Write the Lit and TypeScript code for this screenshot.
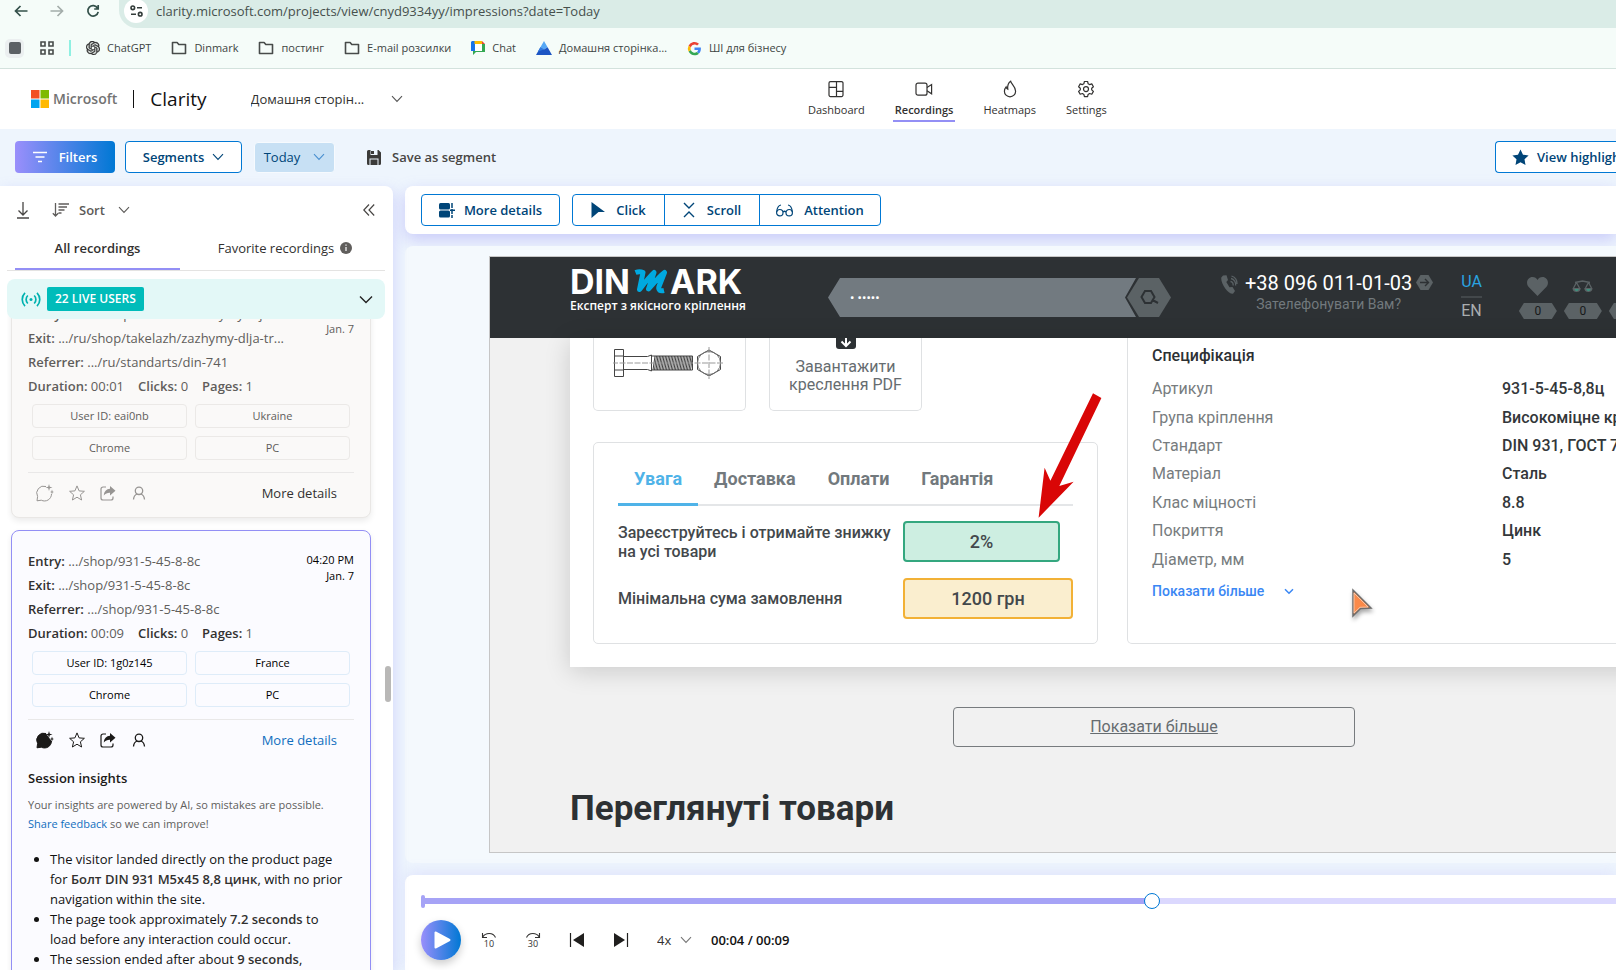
import { LitElement, html, css, svg, nothing } from "lit";
import { customElement } from "lit/decorators.js";
import { classMap } from "lit/directives/class-map.js";

const icon = (w: number, h: number, body: unknown, box = `0 0 ${w} ${h}`) => html`
  <svg width=${w} height=${h} viewBox=${box} fill="none" aria-hidden="true">${body}</svg>
`;

const chevron = (w = 12, color = "currentColor") =>
  icon(w, 8, svg`<path d="M1 1.2 6 6.4l5-5.2" stroke=${color} stroke-width="1.1"/>`, "0 0 12 8");

const folder = () =>
  icon(16, 14, svg`<path d="M1.5 1.5h4.6l1.7 2h6.7v9h-13z" stroke="#474b4a" stroke-width="1.6" stroke-linejoin="round"/>`);

const chatGpt = () =>
  icon(14, 14, svg`<path fill="#333" stroke="#333" stroke-width=".7" d="M22.2819 9.8211a5.9847 5.9847 0 0 0-.5157-4.9108 6.0462 6.0462 0 0 0-6.5098-2.9A6.0651 6.0651 0 0 0 4.9807 4.1818a5.9847 5.9847 0 0 0-3.9977 2.9 6.0462 6.0462 0 0 0 .7427 7.0966 5.98 5.98 0 0 0 .511 4.9107 6.051 6.051 0 0 0 6.5146 2.9001A5.9847 5.9847 0 0 0 13.2599 24a6.0557 6.0557 0 0 0 5.7718-4.2058 5.9894 5.9894 0 0 0 3.9977-2.9001 6.0557 6.0557 0 0 0-.7475-7.0729zm-9.022 12.6081a4.4755 4.4755 0 0 1-2.8764-1.0408l.1419-.0804 4.7783-2.7582a.7948.7948 0 0 0 .3927-.6813v-6.7369l2.02 1.1686a.071.071 0 0 1 .038.052v5.5826a4.504 4.504 0 0 1-4.4945 4.4944zm-9.6607-4.1254a4.4708 4.4708 0 0 1-.5346-3.0137l.142.0852 4.783 2.7582a.7712.7712 0 0 0 .7806 0l5.8428-3.3685v2.3324a.0804.0804 0 0 1-.0332.0615L9.74 19.9502a4.4992 4.4992 0 0 1-6.1408-1.6464zM2.3408 7.8956a4.485 4.485 0 0 1 2.3655-1.9728V11.6a.7664.7664 0 0 0 .3879.6765l5.8144 3.3543-2.0201 1.1685a.0757.0757 0 0 1-.071 0l-4.8303-2.7865A4.504 4.504 0 0 1 2.3408 7.872zm16.5963 3.8558L13.1038 8.364 15.1192 7.2a.0757.0757 0 0 1 .071 0l4.8303 2.7913a4.4944 4.4944 0 0 1-.6765 8.1042v-5.6772a.79.79 0 0 0-.407-.667zm2.0107-3.0231l-.142-.0852-4.7735-2.7818a.7759.7759 0 0 0-.7854 0L9.409 9.2297V6.8974a.0662.0662 0 0 1 .0284-.0615l4.8303-2.7866a4.4992 4.4992 0 0 1 6.6802 4.66zM8.3065 12.863l-2.02-1.1638a.0804.0804 0 0 1-.038-.0567V6.0742a4.4992 4.4992 0 0 1 7.3757-3.4537l-.142.0805L8.704 5.459a.7948.7948 0 0 0-.3927.6813zm1.0976-2.3654l2.602-1.4998 2.6069 1.4998v2.9994l-2.5974 1.4997-2.6067-1.4997Z"/>`, "0 0 24 24");

const googleChat = () =>
  icon(14, 14, svg`
    <path d="M1 0h10v3H4v7H0V1z" fill="#1a73e8"/>
    <path d="M3.5 0H11v3H3.5z" fill="#fbbc04"/>
    <path d="M11 0l3 3h-3z" fill="#ea4335"/>
    <path d="M11 3h3v8H5l-3 3V10h9z" fill="#34a853"/>
    <path d="M4 3h7v7H4z" fill="#fff"/>`);

const peak = () =>
  icon(16, 14, svg`
    <path d="M8 0l3.6 6.3L8 8.6 4.4 6.3z" fill="#56a8f5"/>
    <path d="M4.4 6.3 8 8.6l3.6-2.3L16 14H0z" fill="#1c55c4"/>
    <path d="M8 8.6 4.4 6.3 2 10.5z" fill="#2f7be0"/>`);

const google = () =>
  icon(15, 15, svg`
    <path d="M13.900 7.700c0-.5 0-.9-.1-1.300H7.500v2.500h3.600a3.100 3.100 0 0 1-1.300 2l2.100 1.700c1.300-1.200 2-2.900 2-4.900z" fill="#4285f4"/>
    <path d="M7.500 14.300c1.800 0 3.300-.6 4.400-1.600l-2.100-1.700a4 4 0 0 1-6-2.100L1.600 10.600a6.700 6.700 0 0 0 5.900 3.700z" fill="#34a853"/>
    <path d="M3.800 8.900a4 4 0 0 1 0-2.600L1.600 4.600a6.700 6.700 0 0 0 0 6z" fill="#fbbc05"/>
    <path d="M7.500 3.600c1 0 1.900.3 2.600 1l1.900-1.900A6.700 6.700 0 0 0 1.600 4.600l2.200 1.700a4 4 0 0 1 3.700-2.700z" fill="#ea4335"/>`);

interface Bookmark { label: string; glyph: () => unknown }
const bookmarks: Bookmark[] = [
  { label: "ChatGPT", glyph: chatGpt },
  { label: "Dinmark", glyph: folder },
  { label: "постинг", glyph: folder },
  { label: "E-mail розсилки", glyph: folder },
  { label: "Chat", glyph: googleChat },
  { label: "Домашня сторінка…", glyph: peak },
  { label: "ШІ для бізнесу", glyph: google },
];

const navItems = [
  { label: "Dashboard", glyph: svg`<path d="M3.500 1.600h11a1.500 1.500 0 0 1 1.500 1.500v12a1.500 1.500 0 0 1-1.500 1.500h-11A1.500 1.500 0 0 1 2 15.100v-12a1.500 1.500 0 0 1 1.500-1.500zM9.500 1.600v15M2 7.400h7.500M9.500 11.400H16"/>` },
  { label: "Recordings", active: true, glyph: svg`<rect x="1" y="3.200" width="11" height="12" rx="2"/><path d="m12 7.600 4.600-3v9.200l-4.600-3"/>` },
  { label: "Heatmaps", glyph: svg`<path d="M9.600 1.200c.4 2.800 5 5.400 5 10a5.600 5.600 0 0 1-11.200 0c0-1.800.7-3.200 1.700-4.400.3 1.300.8 2 1.700 2.400C6.400 6 7 3 9.600 1.200z"/>` },
  { label: "Settings", glyph: svg`<path d="M7.400 1.500h3.200l.5 2.200 1.500.9 2.200-.7 1.600 2.800-1.700 1.500v1.700l1.700 1.500-1.600 2.800-2.200-.7-1.500.9-.5 2.200H7.400l-.5-2.200-1.500-.9-2.200.7-1.600-2.800 1.700-1.500V8.200L1.600 6.700l1.600-2.800 2.200.7 1.500-.9z" stroke-linejoin="round"/><circle cx="9" cy="9.050" r="2.500"/>` },
];

interface Recording {
  entry: string; exit: string; referrer: string;
  time: string; duration: string; user: string; country: string;
  selected?: boolean;
}
const recordings: Recording[] = [
  { entry: ".../ru/shop/takelazh/zazhymy-dlja-tr...", exit: ".../ru/shop/takelazh/zazhymy-dlja-tr...", referrer: ".../ru/standarts/din-741", time: "04:21 PM", duration: "00:01", user: "eai0nb", country: "Ukraine" },
  { entry: ".../shop/931-5-45-8-8c", exit: ".../shop/931-5-45-8-8c", referrer: ".../shop/931-5-45-8-8c", time: "04:20 PM", duration: "00:09", user: "1g0z145", country: "France", selected: true },
];

const specs = [
  ["Артикул", "931-5-45-8,8ц"],
  ["Група кріплення", "Високоміцне кріплення"],
  ["Стандарт", "DIN 931, ГОСТ 7798-70"],
  ["Матеріал", "Сталь"],
  ["Клас міцності", "8.8"],
  ["Покриття", "Цинк"],
  ["Діаметр, мм", "5"],
];

const reset = css`
  *, *::before, *::after { box-sizing: border-box; }
  h2, h3, p, ul, dl, dd { margin: 0; padding: 0; }
  button, input, select { font: inherit; color: inherit; margin: 0; }
  button { border: 0; background: none; padding: 0; white-space: nowrap; cursor: pointer; }
  a { color: inherit; text-decoration: none; }
  svg { display: block; flex: none; }
`;

@customElement("browser-bar")
class BrowserBar extends LitElement {
  static styles = [reset, css`
    :host { display: block; flex: none; background: #f5fcf9; border-bottom: 1px solid #d3e2dd; font-size: 11px; color: #3d4543; }
    .address { display: flex; height: 28px; align-items: center; }
    .tools { display: flex; align-items: center; height: 22px; gap: 22px; padding-left: 14px; margin-bottom: 6px; width: 119px; flex: none; }
    .pill { flex: 1; height: 28px; display: flex; align-items: center; gap: 8px; padding: 0 0 6px 5px; background: #daece7; border-radius: 0 0 0 18px; }
    .info { width: 24px; height: 24px; border-radius: 50%; background: #fff; display: grid; place-items: center; flex: none; }
    .url { flex: 1; border: 0; padding: 0; outline: 0; background: none; font-size: 13px; color: #46504d; }
    .marks { display: flex; align-items: center; height: 40px; padding-left: 5px; }
    .tab { width: 19px; height: 19px; border-radius: 5px; background: #ebeff0; display: grid; place-items: center; margin-right: 16px; }
    .rule { width: 2px; height: 16px; background: #8ff0e2; margin: 0 15px; }
    .mark { display: flex; align-items: center; gap: 7px; margin-right: 20px; white-space: nowrap; }
  `];
  render() {
    return html`
      <div class="address">
        <div class="tools">
          ${icon(14, 12, svg`<path d="M13.500 6H1.500M6.500 1 1.500 6l5 5" stroke="#33504a" stroke-width="1.700"/>`)}
          ${icon(14, 12, svg`<path d="M.5 6h12M7.500 1l5 5-5 5" stroke="#a3adaa" stroke-width="1.700"/>`)}
          ${icon(14, 14, svg`<path d="M11.600 4.200A5.200 5.200 0 1 0 12.200 7.800M12.200 1v4H8.200" stroke="#33504a" stroke-width="1.700"/>`)}
        </div>
        <div class="pill">
          <span class="info">${icon(13, 12, svg`<g stroke="#333c3a" stroke-width="1.600"><circle cx="2.800" cy="2.800" r="1.800"/><path d="M7 2.800h5M1 9.200h5"/><circle cx="10.200" cy="9.200" r="1.800"/></g>`)}</span>
          <input class="url" aria-label="Address" value="clarity.microsoft.com/projects/view/cnyd9334yy/impressions?date=Today" />
        </div>
      </div>
      <div class="marks">
        <span class="tab">${icon(12, 12, svg`<rect width="12" height="12" rx="2" fill="#5c6165"/>`)}</span>
        ${icon(14, 14, svg`<g stroke="#474b4a" stroke-width="1.600"><path d="M1 1h4v4H1zM9 1h4v4H9zM1 9h4v4H1zM9 9h4v4H9z"/></g>`)}
        <span class="rule"></span>
        ${bookmarks.map((b) => html`<a class="mark" href="#">${b.glyph()}${b.label}</a>`)}
      </div>`;
  }
}

@customElement("recording-card")
class RecordingCard extends LitElement {
  static properties = { data: { attribute: false } };
  declare data: Recording;
  static styles = [reset, css`
    :host { display: block; }
    .card { padding: 18px 16px 4px; border: 1px solid #e9e7e5; border-radius: 8px; background: #faf9f8; color: #5f5d5b; box-shadow: 0 3px 6px rgba(0, 0, 0, .08); }
    .card.on { background: #fbfbff; border-color: #938ff5; color: #605e5c; }
    .top { display: flex; justify-content: space-between; }
    .line { line-height: 24px; white-space: nowrap; }
    .line b { font-weight: 600; }
    .on b { color: #323130; }
    .stats { display: flex; gap: 14px; }
    .when { font-size: 11px; line-height: 16px; text-align: right; padding-top: 3px; white-space: nowrap; flex: none; }
    .chips { display: grid; grid-template-columns: 1fr 1fr; gap: 8px; margin: 6px 4px 12px; }
    .chip { height: 24px; border: 1px solid #ebe9e7; border-radius: 4px; font-size: 11px; line-height: 22px; text-align: center; }
    .on .chip { border-color: #deecf9; }
    .on .chip, .on .when { color: #000; }
    .actions { display: flex; align-items: center; height: 41px; border-top: 1px solid #e9e8e8; padding: 0 17px 0 8px; gap: 15px; color: #979593; }
    .actions.on { color: #1b1a19; }
    .more { margin-left: auto; color: #323130; }
    .on .more, .link { color: #106ebe; }
    h3 { font-size: 13px; line-height: 24px; margin-top: 6px; font-weight: 600; color: #1b1a19; }
    .note { font-size: 11px; line-height: 19px; margin-top: 5px; }
    ul { margin-top: 16px; padding: 0 8px 0 22px; line-height: 20px; color: #111; }
    ul b { font-weight: 600; }
  `];
  render() {
    const r = this.data;
    const on = !!r.selected;
    return html`
      <article class=${classMap({ card: true, on })}>
        <div class="top">
          <div>
            <div class="line"><b>Entry:</b> ${r.entry}</div>
            <div class="line"><b>Exit:</b> ${r.exit}</div>
          </div>
          <div class="when">${r.time}<br />Jan. 7</div>
        </div>
        <div class="line"><b>Referrer:</b> ${r.referrer}</div>
        <div class="line stats"><span><b>Duration:</b> ${r.duration}</span><span><b>Clicks:</b> 0</span><span><b>Pages:</b> 1</span></div>
        <div class="chips">
          <span class="chip">User ID: ${r.user}</span><span class="chip">${r.country}</span>
          <span class="chip">Chrome</span><span class="chip">PC</span>
        </div>
        <div class=${classMap({ actions: true, on })}>
          <button aria-label="Insights">${icon(18, 18, svg`
            <path d="M10 2.500A7 7 0 0 0 1.600 12.500L1 16.800l4.300-.6A7 7 0 0 0 15.500 10" stroke="currentColor" fill=${on ? "currentColor" : "none"}/>
            <path d="M13 0l.8 2.700 2.700.8-2.700.8L13 7l-.8-2.700-2.700-.8 2.700-.8zM16 5.500l.6 1.900 1.400.6-1.400.6-.6 1.900-.6-1.900L14 8l1.400-.6z" fill="currentColor"/>
            ${on ? svg`<path d="M9 4.500 11 5.500l1.500 3.500 2.500 2-5 3-3-5z" fill="currentColor"/>` : nothing}`)}</button>
          <button aria-label="Favorite">${icon(16, 16, svg`<path d="m8 .9 2.100 5 5.300.4-4 3.500 1.200 5.200L8 12.200 3.400 15l1.200-5.200-4-3.500 5.300-.4z" stroke="currentColor"/>`)}</button>
          <button aria-label="Share">${icon(16, 16, svg`
            <path d="M6 2H3a2 2 0 0 0-2 2v9a2 2 0 0 0 2 2h8a2 2 0 0 0 2-2v-1.500" stroke="currentColor" stroke-width="1.200"/>
            <path d="M10 1l5.500 4.700L10 10.400V7.700C7.500 7.600 5.500 8.400 3.800 10.600 4 6.500 6.400 3.900 10 3.700z" fill="currentColor"/>`)}</button>
          <button aria-label="Visitor">${icon(16, 14, svg`<circle cx="8" cy="4.800" r="3.700" stroke="currentColor" stroke-width="1.300"/><path d="M2.500 13.500c.2-2.700 1.500-4.700 3.500-5.500M13.500 13.500c-.2-2.700-1.500-4.700-3.500-5.500" stroke="currentColor" stroke-width="1.300"/>`)}</button>
          <button class="more">More details</button>
        </div>
        ${on ? html`
          <h3>Session insights</h3>
          <p class="note">Your insights are powered by AI, so mistakes are possible.<br /><a class="link" href="#">Share feedback</a> so we can improve!</p>
          <ul>
            <li>The visitor landed directly on the product page for <b>Болт DIN 931 М5х45 8,8 цинк</b>, with no prior navigation within the site.</li>
            <li>The page took approximately <b>7.2 seconds</b> to load before any interaction could occur.</li>
            <li>The session ended after about <b>9 seconds</b>, without any clicks.</li>
          </ul>` : nothing}
      </article>`;
  }
}

@customElement("replayed-page")
class ReplayedPage extends LitElement {
  static styles = [reset, css`
    :host { display: block; width: 1328px; position: relative; font-family: Roboto, sans-serif; font-size: 16px; color: #43484b; }
    .head { display: flex; height: 81px; background: #2d3134; padding: 0 0 0 80px; color: #fff; }
    .logo { width: 176px; padding-top: 9px; }
    .word { display: flex; align-items: center; gap: 3px; font: 700 34px/32px Inter, sans-serif; height: 32px; }
    .tag { font: 600 12px/16px "Open Sans", sans-serif; white-space: nowrap; }
    .search { display: flex; margin: 21px 0 0 82px; height: 39px; width: 343px; }
    .field { width: 308px; height: 39px; border: 0; outline: 0; padding: 0 0 0 22px; background: #727a80; color: #fff; font-size: 13px; clip-path: polygon(12px 0, 100% 0, 297px 50%, 100% 100%, 12px 100%, 0 50%); }
    .go { width: 44px; height: 39px; margin-left: -9px; background: #5b6265; clip-path: polygon(12px 0, 32px 0, 100% 50%, 32px 100%, 12px 100%, 0 50%); display: grid; place-items: center; }
    .call { display: flex; margin: 16px 0 0 50px; gap: 7px; }
    .call .glyph { padding-top: 2px; }
    .num { display: block; font-size: 20px; line-height: 20px; white-space: nowrap; }
    .ask { display: block; font-size: 14px; line-height: 22px; color: #72797d; text-align: center; }
    .call .next { margin-left: -3px; }
    .lang { margin: 15px 0 0 28px; line-height: 20px; color: #a9adaf; }
    .lang a { display: block; }
    .lang .cur { color: #2aa3e0; border-bottom: 2px solid #43484b; padding-bottom: 4px; margin-bottom: 3px; }
    .counters { display: flex; margin: 20px 0 0 37px; gap: 7px; }
    .counter { display: grid; justify-items: center; grid-template-rows: 26px 16px; }
    .count { width: 38px; height: 16px; font-size: 12px; line-height: 16px; text-align: center; color: #17191a; background: #5b6265; clip-path: polygon(5px 0, 33px 0, 100% 50%, 33px 100%, 5px 100%, 0 50%); }
    .panel { margin: 0 80px; padding: 0 23px 23px; background: #fff; box-shadow: 0 4px 24px rgba(0, 0, 0, .16); display: grid; grid-template-columns: 505px 1fr; column-gap: 29px; }
    .body { background: #f1f1f1; }
    .files { display: flex; gap: 23px; margin-bottom: 31px; }
    .file { width: 153px; height: 73px; border: 1px solid #dfe1e3; border-top: 0; border-radius: 0 0 5px 5px; display: flex; flex-direction: column; align-items: center; justify-content: flex-start; font-size: 16px; line-height: 18px; text-align: center; color: #666c70; }
    .file .pic { margin-top: 9px; }
    .file .get { margin-bottom: 9px; }
    .info { height: 202px; border: 1px solid #dfe1e3; border-radius: 5px; padding: 14px 24px 0; }
    .tabs { display: flex; border-bottom: 2px solid #e4e6e8; margin-bottom: 15px; }
    .tab { font-size: 18px; font-weight: 700; line-height: 44px; padding: 0 16px 2px; color: #72797d; border-bottom: 3px solid transparent; margin-bottom: -2px; }
    .tab.on { color: #4fb3e8; border-color: #4fb3e8; }
    .row { display: grid; grid-template-columns: 285px 1fr; align-items: center; font-weight: 500; line-height: 19px; margin-bottom: 16px; }
    .pill { height: 41px; border: 2px solid #34a77f; border-radius: 4px; background: #cdeee1; font-size: 18px; line-height: 37px; text-align: center; margin-right: 13px; }
    .pill.sum { background: #faeecf; border-color: #f2b136; margin-right: 0; }
    .spec { border: 1px solid #dfe1e3; border-top: 0; border-radius: 0 0 5px 5px; padding: 8px 24px 0; }
    h3 { font-size: 16px; line-height: 20px; font-weight: 500; color: #2d3134; margin-bottom: 9px; }
    table { height: 199px; width: 100%; border-collapse: collapse; }
    th { width: 350px; padding: 0; font-weight: 400; text-align: left; color: #777c7e; }
    td { padding: 0; font-weight: 500; color: #33373a; }
    .show { display: flex; align-items: center; gap: 20px; margin-top: 7px; font-size: 14px; font-weight: 500; line-height: 20px; color: #3a87f4; }
    .all { display: block; width: 402px; height: 40px; margin: 40px auto 0; border: 1px solid #777b7e; border-radius: 4px; color: #666c70; text-decoration: underline; }
    h2 { padding: 40px 80px 0; font-size: 35px; line-height: 44px; font-weight: 700; color: #2d3134; height: 110px; }
    .arrow { position: absolute; left: 546px; top: 134px; }
    .pointer { position: absolute; left: 861px; top: 331px; filter: drop-shadow(1px 3px 2px rgba(0, 0, 0, .35)); }
  `];
  render() {
    return html`
      <header class="head">
        <div class="logo">
          <div class="word" aria-label="DINMARK"><span>DIN</span>
            ${icon(34, 26, svg`<path d="M2.500 3.500C5 2.500 8 2.500 10 3.500L6.500 20.500C10 16 16 8 21 3.500L15.500 20C20 15.500 25 8.500 31.500 3.500L26 17.500C25 21 27 22.500 31 21.500" stroke="#00a9e0" stroke-width="5" stroke-linejoin="round"/>`)}
            <span>ARK</span></div>
          <div class="tag">Експерт з якісного кріплення</div>
        </div>
        <div class="search">
          <input class="field" aria-label="Пошук" value="• •••••" />
          <button class="go" aria-label="Шукати">${icon(19, 15, svg`<path d="M5 1h6l3.500 6L11 13H5L1.500 7zM12.500 10l5.500 3" stroke="#2d3134" stroke-width="2"/>`)}</button>
        </div>
        <div class="call">
          <span class="glyph">${icon(17, 19, svg`
            <path d="M2 .5 5.500.300 7 5 5.300 7l3.200 5.300L11.500 12l2.500 4-2 2.800C6.500 19-.5 8 .3 2.500z" fill="#5b6265"/>
            <path d="M9.500 6.500a3 3 0 0 1 2.500 4M10 3.500a6 6 0 0 1 4.600 7M10.500 1a8 8 0 0 1 5.500 8" stroke="#5b6265" stroke-width="1.300"/>`)}</span>
          <div><a class="num" href="#">+38 096 011-01-03</a><a class="ask" href="#">Зателефонувати Вам?</a></div>
          <span class="glyph next">${icon(17, 15, svg`<path d="M4.500 0h8L17 7.500 12.500 15h-8L0 7.500z" fill="#5b6265"/><path d="M4 7.500h8.500M9 4l3.500 3.500L9 11" stroke="#2d3134" stroke-width="1.400"/>`)}</span>
        </div>
        <div class="lang"><a class="cur" href="#">UA</a><a href="#">EN</a></div>
        <div class="counters">
          <div class="counter">${icon(21, 19, svg`<path d="M10.500 19 1.700 10C-2 5.500 1 0 5.500 0c2.300 0 4 1.200 5 3 1-1.800 2.700-3 5-3C20 0 23 5.500 19.300 10z" fill="#5b6265"/>`)}<span class="count">0</span></div>
          <div class="counter">${icon(21, 19, svg`
            <path d="M3 5.500 10.500 4 18 5.500M4.500 5.500 1.500 11M4.500 5.500l3 5.500M16.500 5.500l-3 5.500M16.500 5.500l3 5.500" stroke="#5b6265" stroke-width="1.300"/>
            <path d="M.5 11h8.200a4.100 4.100 0 0 1-8.200 0zM12.300 11h8.200a4.100 4.100 0 0 1-8.200 0z" fill="#5b6265"/><path d="M2.500 12h4.300a2 2 0 0 1-4.300 0zM14.300 12h4.300a2 2 0 0 1-4.300 0z" fill="#3f8f7c"/>`)}<span class="count">0</span></div>
          <div class="counter"><span></span><span class="count">0</span></div>
        </div>
      </header>
      <div class="body">
        <section class="panel">
          <div>
            <div class="files">
              <div class="file"><span class="pic">${icon(114, 32, svg`
                <g stroke="#444" stroke-width="1">
                  <path d="M3.500 2.500h9v27h-9zM3.500 9h9M3.500 23h9M12.500 9.500h24l4-1.500v16l-4-1.500h-24M40.500 9h41v14h-41M40.500 9v14"/>
                  ${[42, 45, 48, 51, 54, 57, 60, 63, 66, 69, 72, 75, 78].map((x) => svg`<path d=${`M${x} 23l2-14M${x + 1.5} 23l2-14`}/>`)}
                  <path d="M98 3l11.500 6.500v13L98 29l-11.500-6.500v-13z"/><circle cx="98" cy="16" r="11.500" stroke="#777"/>
                </g>
                <path d="M1 16h112M98 0v32" stroke="#999" stroke-dasharray="6 1.500"/>`, "2 0 114 32")}</span></div>
              <button class="file"><span class="get">${icon(20, 11, svg`<path d="M0 0h20v8a3 3 0 0 1-3 3H3a3 3 0 0 1-3-3z" fill="#2d3134"/><path d="M10 0v7M5.500 3.500 10 8l4.500-4.500" stroke="#fff" stroke-width="2"/>`)}</span>Завантажити<br />креслення PDF</button>
            </div>
            <div class="info">
              <div class="tabs">
                <button class="tab on">Увага</button><button class="tab">Доставка</button><button class="tab">Оплати</button><button class="tab">Гарантія</button>
              </div>
              <div class="row"><span>Зареєструйтесь і отримайте знижку<br />на усі товари</span><span class="pill">2%</span></div>
              <div class="row"><span>Мінімальна сума замовлення</span><span class="pill sum">1200 грн</span></div>
            </div>
          </div>
          <div class="spec">
            <h3>Специфікація</h3>
            <table><tbody>${specs.map(([k, v]) => html`<tr><th scope="row">${k}</th><td>${v}</td></tr>`)}</tbody></table>
            <button class="show">Показати більше ${icon(10, 7, svg`<path d="m1 1.200 4 4 4-4" stroke="#3a87f4" stroke-width="1.500"/>`)}</button>
          </div>
        </section>
        <button class="all">Показати більше</button>
        <h2>Переглянуті товари</h2>
      </div>
      <span class="arrow">${icon(68, 130, svg`<path d="M57 2.300 65.400 7 23.300 95l14.300-4.300L2.600 126.700l6-50 5.800 13z" fill="#d90606"/>`)}</span>
      <span class="pointer">${icon(22, 30, svg`<path d="M2 2v26l7.500-7.500L20 20z" fill="#fb8a4a" stroke="#6d6d6d" stroke-width="1.500"/><path d="M3 5v20l6-5.700 8-.3z" stroke="#f6d3bd" stroke-width=".8"/>`)}</span>`;
  }
}

@customElement("app-root")
class AppRoot extends LitElement {
  static styles = [reset, css`
    :host { display: flex; flex-direction: column; height: 100vh; overflow: hidden; background: #eef5fd; font: 13px/20px "Open Sans", "Noto Sans", sans-serif; color: #323130; }
    .head { display: flex; flex: none; height: 60px; background: #fff; }
    .brand { flex: 0 0 50%; display: flex; align-items: center; padding-left: 31px; }
    .ms { font-size: 14px; font-weight: 600; color: #737373; margin-left: 4px; }
    .bar { width: 1px; height: 18px; background: #111; margin: 0 16px; }
    .clarity { font-size: 19px; color: #111; margin-right: 44px; }
    .pick { display: flex; align-items: center; }
    .pick select { appearance: none; border: 0; background: none; outline: 0; padding: 0 38px 0 0; }
    .pick svg { margin-left: -12px; pointer-events: none; }
    .nav { display: flex; align-items: flex-start; gap: 26px; padding-top: 11px; font-size: 11px; }
    .nav a { display: flex; flex-direction: column; align-items: center; line-height: 20px; height: 42px; gap: 2px; padding: 0 2px; border-bottom: 2px solid transparent; }
    .nav a:first-child { padding-left: 0; }
    .nav svg { stroke: #323130; stroke-width: 1.2; }
    .nav .on { font-weight: 600; border-color: #938ff5; }
    .filters { display: flex; flex: none; align-items: center; height: 57px; padding-left: 15px; gap: 10px; padding-bottom: 1px; font-weight: 600; }
    .btn { display: flex; align-items: center; justify-content: center; height: 32px; border: 1px solid #0078d4; border-radius: 4px; background: #fff; color: #004578; font-weight: 600; }
    .btn.filter { width: 100px; gap: 12px; border: 0; color: #fff; background: linear-gradient(90deg, #9a8ffb, #0078d4); }
    .btn.seg { width: 117px; gap: 8px; }
    .btn.day { width: 81px; height: 31px; gap: 13px; margin-left: 2px; border: 1px solid #f6fafe; background: #c7e0f4; font-weight: 400; }
    .save { display: flex; align-items: center; gap: 11px; margin-left: 22px; font-weight: 600; color: #484644; }
    .hl { margin-left: auto; flex: 0 0 121px; justify-content: flex-start; gap: 8px; padding-left: 16px; border-right: 0; border-radius: 4px 0 0 4px; overflow: hidden; }
    .work { flex: 1; min-height: 0; display: grid; grid-template-columns: 393px 1fr; gap: 12px; }
    .side { display: flex; flex-direction: column; min-height: 0; background: #fff; border-radius: 0 8px 0 0; box-shadow: 2px 4px 14px rgba(147, 143, 245, .28); position: relative; padding: 0 8px 0 7px; }
    .sort { display: flex; align-items: center; height: 48px; padding: 0 10px 0 9px; font-weight: 600; color: #5c5a58; }
    .sort button { display: flex; align-items: center; }
    .order { margin-left: 22px; gap: 10px; font-weight: 600; }
    .fold { margin-left: auto; }
    .tabs { display: grid; grid-template-columns: 165px 1fr; column-gap: 13px; height: 37px; border-bottom: 1px solid #e4e3e2; padding: 0 8px; }
    .tabs button { display: flex; justify-content: center; gap: 6px; padding-top: 4px; }
    .tabs .on { font-weight: 600; border-bottom: 2px solid #938ff5; }
    .live { display: flex; align-items: center; flex: none; height: 40px; margin-top: 8px; padding: 0 12px 0 14px; gap: 6px; border-radius: 8px; background: #e3f8f7; z-index: 1; }
    .users { height: 24px; padding: 0 8px; border-radius: 2px; background: #00bcba; color: #fff; font-size: 12px; font-weight: 600; line-height: 24px; }
    .live svg:last-child { margin-left: auto; }
    .list { flex: 1; min-height: 0; overflow: hidden; margin-top: -36px; padding: 0 14px 0 4px; display: flex; flex-direction: column; gap: 12px; }
    .list > * { flex: none; }
    .thumb { position: absolute; right: 2px; top: 480px; width: 6px; height: 36px; border-radius: 3px; background: #b9b8b7; }
    .main { display: flex; flex-direction: column; min-width: 0; min-height: 0; }
    .tools { display: flex; align-items: center; flex: none; gap: 12px; height: 48px; padding-left: 16px; background: #fff; border-radius: 8px 0 0 8px; box-shadow: 0 6px 16px rgba(147, 143, 245, .4); }
    .tools .btn { gap: 9px; width: 139px; }
    .group { display: flex; }
    .tools .group .btn { width: 93px; border-radius: 4px 0 0 4px; gap: 11px; }
    .tools .group .mid { width: 96px; border-radius: 0; margin: 0 -1px; gap: 12px; }
    .tools .group .end { width: 122px; border-radius: 0 4px 4px 0; }
    .stage { flex: 1; min-height: 0; margin: 12px 0; padding: 10px 0 10px 84px; border-radius: 8px 0 0 8px; background: #f4f9fd; display: flex; }
    .frame { flex: 1; min-width: 0; overflow: hidden; border: 1px solid #c6c6c6; border-right: 0; background: #f1f1f1; }
    .player { flex: none; height: 95px; padding: 18px 0 0 16px; background: #fff; border-radius: 8px 0 0 0; box-shadow: 0 -4px 14px rgba(147, 143, 245, .14); }
    .track { display: flex; align-items: center; height: 16px; }
    .cap { width: 4px; height: 13px; border-radius: 2px; background: #a6a3f6; margin-right: -4px; z-index: 1; }
    .seek { appearance: none; flex: 1; height: 6px; background: linear-gradient(90deg, #a6a3f6 61%, #dbd8fe 61%); outline: 0; }
    .seek::-webkit-slider-thumb { appearance: none; width: 16px; height: 16px; border: 1px solid #0078d4; border-radius: 50%; background: #fff; }
    .controls { display: flex; align-items: center; height: 40px; margin-top: 11px; }
    .play { width: 40px; height: 40px; border-radius: 50%; display: grid; place-items: center; background: linear-gradient(90deg, #9a8ffb, #0078d4); box-shadow: 0 4px 8px rgba(0, 0, 0, .2); margin-right: 20px; padding-left: 3px; }
    .controls .step { margin-right: 28px; }
    .speed select { padding-right: 20px; }
    .time { margin-left: 19px; font-weight: 600; color: #111; }
  `];
  render() {
    return html`
      <browser-bar></browser-bar>
      <header class="head">
        <div class="brand">
          ${icon(18, 18, svg`<path d="M0 0h8.500v8.500H0z" fill="#f25022"/><path d="M9.500 0H18v8.500H9.500z" fill="#7fba00"/><path d="M0 9.500h8.500V18H0z" fill="#00a4ef"/><path d="M9.500 9.500H18V18H9.500z" fill="#ffb900"/>`)}
          <span class="ms">Microsoft</span><span class="bar"></span><span class="clarity">Clarity</span>
          <label class="pick"><select aria-label="Project"><option>Домашня сторін...</option></select>${chevron(12, "#555")}</label>
        </div>
        <nav class="nav">
          ${navItems.map((n) => html`<a href="#" class=${classMap({ on: !!n.active })}>${icon(18, 18, n.glyph)}${n.label}</a>`)}
        </nav>
      </header>
      <div class="filters">
        <button class="btn filter">${icon(14, 12, svg`<path d="M0 1.500h14M2.500 6h9M5 10.500h4" stroke="#fff" stroke-width="1.500"/>`)}Filters</button>
        <button class="btn seg">Segments ${chevron()}</button>
        <button class="btn day">Today ${chevron(12, "#4a90d0")}</button>
        <button class="save">${icon(14, 15, svg`<path d="M0 1.500A1.500 1.500 0 0 1 1.500 0H11.500L14 2.500v11a1.500 1.500 0 0 1-1.500 1.500h-11A1.500 1.500 0 0 1 0 13.500z" fill="#3b3a39"/><path d="M3.500 0h7v5h-7zM2.500 8.500h9V15h-9z" fill="#eef5fd"/><path d="M4 1h3v3H4zM3.500 9.500h7V15h-7z" fill="#3b3a39"/>`)}Save as segment</button>
        <button class="btn hl">${icon(17, 17, svg`<path d="m8.500.5 2.500 5.200 5.600.7-4.100 3.900 1 5.700-5-2.700-5 2.700 1-5.700L.4 6.400 6 5.700z" fill="#004578"/>`)}View highlights</button>
      </div>
      <div class="work">
        <aside class="side">
          <div class="sort">
            <button aria-label="Download">${icon(14, 17, svg`<path d="M7 0v13M2.500 8.500 7 13l4.500-4.500M1 16h12" stroke="#484644" stroke-width="1.300"/>`)}</button>
            <button class="order">${icon(17, 16, svg`<path d="M3.500 1v13M.8 11.200l2.700 2.800 2.700-2.800M6.500 2H17M6.500 5h8.500M6.500 8H12.500M6.500 11h3" stroke="#605e5c" stroke-width="1.300"/>`)}Sort&nbsp;${chevron()}</button>
            <button class="fold" aria-label="Collapse">${icon(12, 12, svg`<path d="M6 .5.800 6 6 11.500M11.200.5 6 6l5.200 5.500" stroke="#484644" stroke-width="1.200"/>`)}</button>
          </div>
          <div class="tabs">
            <button class="on">All recordings</button>
            <button>Favorite recordings <span>${icon(12, 20, svg`<circle cx="6" cy="10" r="6" fill="#605e5c"/><path d="M6 9v4M6 6.500v1.300" stroke="#ddd" stroke-width="1.500"/>`)}</span></button>
          </div>
          <div class="live">
            ${icon(20, 15, svg`<g stroke="#00b2b0" stroke-width="1.700"><path d="M4 .8a9.500 9.500 0 0 0 0 13.400M16 .8a9.500 9.500 0 0 1 0 13.400M6.800 3.500a5.600 5.600 0 0 0 0 8M13.200 3.500a5.600 5.600 0 0 1 0 8"/></g><circle cx="10" cy="7.500" r="1.500" fill="#00b2b0"/>`)}
            <span class="users">22 LIVE USERS</span>
            ${icon(14, 9, svg`<path d="m1 1.500 6 6 6-6" stroke="#222" stroke-width="1.400"/>`)}
          </div>
          <div class="list">${recordings.map((r) => html`<recording-card .data=${r}></recording-card>`)}</div>
          <span class="thumb"></span>
        </aside>
        <main class="main">
          <div class="tools">
            <button class="btn">${icon(16, 15, svg`<rect y="0" width="11" height="6.500" rx="1.500" fill="#004578"/><rect y="7.500" width="11" height="7" rx="1.500" fill="#004578"/><path d="M13 0v15M11 7.200h5" stroke="#004578" stroke-width="1.500" stroke-dasharray="5 1"/>`)}More details</button>
            <div class="group">
              <button class="btn">${icon(14, 16, svg`<path d="M.5 0 14 10H7.500L.5 16z" fill="#004578"/>`)}Click</button>
              <button class="btn mid">${icon(12, 16, svg`<path d="m1 1 5 5 5-5M1 15l5-5 5 5" stroke="#004578" stroke-width="1.400"/>`)}Scroll</button>
              <button class="btn end">${icon(17, 13, svg`<g stroke="#004578" stroke-width="1.200"><circle cx="3.800" cy="8.700" r="3.200"/><circle cx="13.200" cy="8.700" r="3.200"/><path d="M7 8c.8-.8 2.200-.8 3 0M.7 8C1 4 2 1.500 5 1M16.300 8C16 4 15 1.500 12 1"/></g>`)}Attention</button>
            </div>
          </div>
          <div class="stage"><div class="frame"><replayed-page></replayed-page></div></div>
          <div class="player">
            <div class="track"><span class="cap"></span><input class="seek" type="range" aria-label="Playback position" min="0" max="1000" value="613" /></div>
            <div class="controls">
              <button class="play" aria-label="Play">${icon(17, 18, svg`<path d="M1.500 1.500v15L15.500 9z" fill="#fff" stroke="#fff" stroke-width="2" stroke-linejoin="round"/>`)}</button>
              <button class="step" aria-label="Back 10 seconds">${icon(16, 22, svg`<path d="M1.500 4v4.500H6M1.800 8C4.500 3.500 12 3.200 14.500 8.500" stroke="#323130" stroke-width="1.100"/><text x="8" y="18" font-size="9" text-anchor="middle" fill="#323130">10</text>`)}</button>
              <button class="step" aria-label="Forward 30 seconds">${icon(16, 22, svg`<path d="M14.500 4v4.500H10M14.200 8C11.500 3.500 4 3.200 1.500 8.500" stroke="#323130" stroke-width="1.100"/><text x="8" y="18" font-size="9" text-anchor="middle" fill="#323130">30</text>`)}</button>
              <button class="step" aria-label="Previous">${icon(16, 14, svg`<path d="M1.500 0v14" stroke="#201f1e" stroke-width="1.200"/><path d="M15 0v14L4 7z" fill="#201f1e"/>`)}</button>
              <button class="step" aria-label="Next">${icon(16, 14, svg`<path d="M14.500 0v14" stroke="#201f1e" stroke-width="1.200"/><path d="M1 0v14l11-7z" fill="#201f1e"/>`)}</button>
              <label class="pick speed"><select aria-label="Speed"><option>4x</option></select>${chevron(12, "#777")}</label>
              <span class="time">00:04 / 00:09</span>
            </div>
          </div>
        </main>
      </div>`;
  }
}
